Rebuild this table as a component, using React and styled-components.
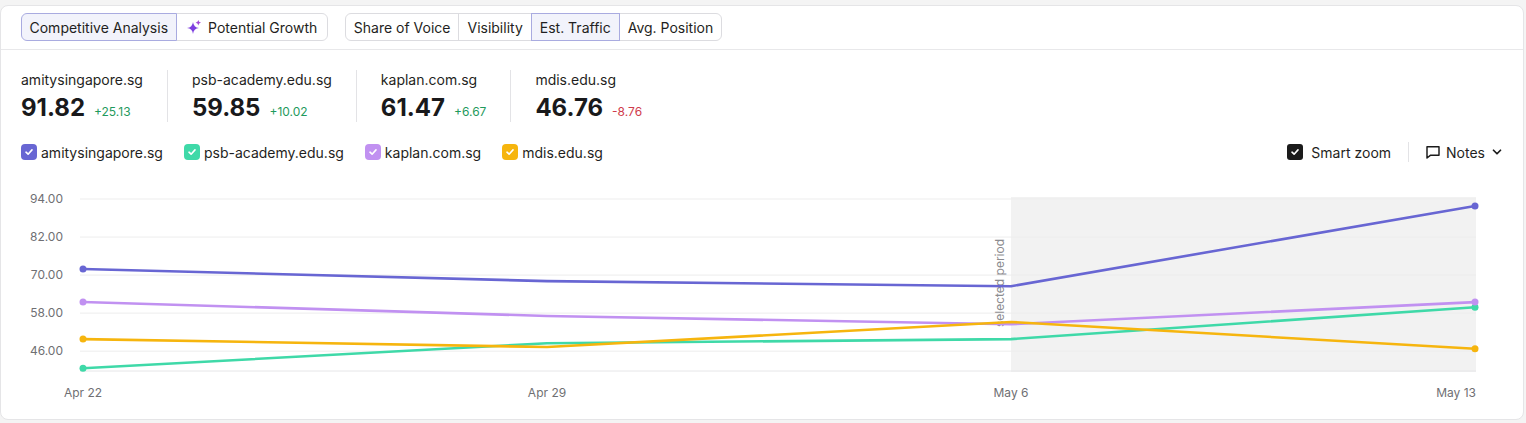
import React from "react";
import styled, { createGlobalStyle } from "styled-components";

const GlobalStyle = createGlobalStyle`
  html, body { margin: 0; padding: 0; background: #f4f4f4; }
  body { font-family: Inter, "Noto Sans", Arial, sans-serif; color: #1b1b1b; }
  * { box-sizing: border-box; }
`;

const Page = styled.div`
  padding: 5px 2px 3px 0;
`;

const Card = styled.div`
  background: #fff;
  border: 1px solid #e5e5e7;
  border-radius: 8px;
  height: 415px;
  overflow: hidden;
  display: flex;
  flex-direction: column;
`;

const Header = styled.div`
  display: flex;
  gap: 17px;
  padding: 7px 20px 8px;
  border-bottom: 1px solid #e8e8ea;
`;

const SegGroup = styled.div`
  display: flex;
`;

const Seg = styled.div`
  position: relative;
  z-index: ${(p) => (p.$active ? 1 : 0)};
  height: 28px;
  display: flex;
  align-items: center;
  gap: 6px;
  padding: 0 ${(p) => p.$pad || 8}px;
  font-size: 14px;
  color: #1f1f22;
  white-space: nowrap;
  background: ${(p) => (p.$active ? "#f2f3fb" : "#fff")};
  border: 1px solid ${(p) => (p.$active ? "#a9abe0" : "#dcdce0")};
  margin-left: -1px;
  &:first-child { margin-left: 0; border-radius: 6px 0 0 6px; }
  &:last-child { border-radius: 0 6px 6px 0; }
`;

const Metrics = styled.div`
  display: flex;
  padding: 20px 20px 0;
`;

const Metric = styled.div`
  display: flex;
  flex-direction: column;
  padding: 0 24px;
  border-left: 1px solid #e3e3e6;
  &:first-child { padding-left: 0; border-left: none; }
`;

const MetricLabel = styled.div`
  font-size: 14px;
  line-height: 20px;
  color: #1f1f22;
`;

const ValueRow = styled.div`
  display: flex;
  align-items: baseline;
  gap: 9px;
  margin-top: 4px;
`;

const Value = styled.span`
  font-size: 24px;
  line-height: 28px;
  font-weight: 700;
  color: #19191b;
`;

const Delta = styled.span`
  font-size: 12px;
  color: ${(p) => (p.$neg ? "#cf3b4c" : "#1f9a5d")};
`;

const LegendRow = styled.div`
  display: flex;
  justify-content: space-between;
  align-items: center;
  height: 20px;
  margin-top: 20px;
  padding: 0 19px 0 20px;
`;

const LegendList = styled.div`
  display: flex;
  align-items: center;
  gap: 21px;
`;

const LegendItem = styled.div`
  display: flex;
  align-items: center;
  gap: 4px;
  font-size: 14px;
  color: #1f1f22;
`;

const Box = styled.span`
  width: 16px;
  height: 16px;
  border-radius: ${(p) => p.$r || 4}px;
  background: ${(p) => p.$color};
  display: inline-flex;
  align-items: center;
  justify-content: center;
  flex: none;
`;

const Tools = styled.div`
  display: flex;
  align-items: center;
`;

const Tool = styled.div`
  display: flex;
  align-items: center;
  gap: ${(p) => p.$gap || 8}px;
  font-size: 14px;
  color: #1f1f22;
`;

const VDivider = styled.div`
  width: 1px;
  height: 20px;
  background: #e3e3e6;
  margin: 0 16px 0 17px;
`;

const ChartSvg = styled.svg`
  display: block;
  margin-top: 12px;
  font-family: Inter, "Noto Sans", Arial, sans-serif;
`;

const Check = () => (
  <svg width="10" height="10" viewBox="0 0 10 10">
    <path d="M2 5.2 L4.1 7.2 L8 2.9" fill="none" stroke="#fff" strokeWidth="1.6" strokeLinecap="round" strokeLinejoin="round" />
  </svg>
);

const Sparkle = () => (
  <svg width="16" height="16" viewBox="0 0 16 16">
    <path d="M7 3 Q7.6 8.4 13 9 Q7.6 9.6 7 15 Q6.4 9.6 1 9 Q6.4 8.4 7 3 Z" fill="#7d3fe0" />
    <path d="M12.3 1 Q12.6 3.4 15 3.7 Q12.6 4 12.3 6.4 Q12 4 9.6 3.7 Q12 3.4 12.3 1 Z" fill="#a54ad8" />
  </svg>
);

const NotesIcon = () => (
  <svg width="16" height="16" viewBox="0 0 24 24" fill="none" stroke="#1b1b1b" strokeWidth="2.2" strokeLinejoin="round">
    <path d="M3 4 H21 V17 H8 L3 21 Z" />
  </svg>
);

const Chevron = () => (
  <svg width="14" height="14" viewBox="0 0 24 24" fill="none" stroke="#1b1b1b" strokeWidth="3" strokeLinecap="round" strokeLinejoin="round">
    <path d="M6 9 L12 15 L18 9" />
  </svg>
);

const metrics = [
  { name: "amitysingapore.sg", value: "91.82", delta: "+25.13" },
  { name: "psb-academy.edu.sg", value: "59.85", delta: "+10.02" },
  { name: "kaplan.com.sg", value: "61.47", delta: "+6.67" },
  { name: "mdis.edu.sg", value: "46.76", delta: "-8.76", neg: true },
];

const series = [
  { name: "amitysingapore.sg", color: "#6866d3", values: [71.9, 68.1, 66.5, 91.82] },
  { name: "psb-academy.edu.sg", color: "#3fd9a8", values: [40.6, 48.5, 49.8, 59.85] },
  { name: "kaplan.com.sg", color: "#c191f1", values: [61.5, 57.1, 54.5, 61.47] },
  { name: "mdis.edu.sg", color: "#f6b50e", values: [49.8, 47.3, 55.2, 46.76] },
];

const xs = [83, 547, 1011, 1475];
const yOf = (v) => 199 + (94 - v) * 3.17;

const linePath = (pts) => pts.map((p, i) => `${i ? "L" : "M"}${p[0]},${p[1]}`).join(" ");

const yTicks = [94, 82, 70, 58, 46];
const xTicks = [
  { label: "Apr 22", x: 83, anchor: "middle" },
  { label: "Apr 29", x: 547, anchor: "middle" },
  { label: "May 6", x: 1011, anchor: "middle" },
  { label: "May 13", x: 1476, anchor: "end" },
];

const Chart = () => (
  <ChartSvg width="1522" height="235" viewBox="1 174 1522 235">
    <rect x="1011" y="197" width="465" height="175" fill="#f2f2f2" />
    {yTicks.map((v) => (
      <g key={v}>
        <line x1="80" x2="1476" y1={yOf(v)} y2={yOf(v)} stroke="#ededed" strokeWidth="1" />
        <text x="63" y={yOf(v) + 4} textAnchor="end" fontSize="12" fill="#6f6f73">
          {v.toFixed(2)}
        </text>
      </g>
    ))}
    <line x1="80" x2="1476" y1="371" y2="371" stroke="#e6e6e8" strokeWidth="1" />
    {xTicks.map((t) => (
      <text key={t.label} x={t.x} y="397" textAnchor={t.anchor} fontSize="12" fill="#6f6f73">
        {t.label}
      </text>
    ))}
    <text x="1004" y="283" transform="rotate(-90 1004 283)" textAnchor="middle" fontSize="12" fill="#8c8c90">
      selected period
    </text>
    {series.map((s) => {
      const pts = s.values.map((v, i) => [xs[i], yOf(v)]);
      return (
        <g key={s.name}>
          <path d={linePath(pts)} fill="none" stroke={s.color} strokeWidth="2.6" strokeLinejoin="round" />
          <circle cx={pts[0][0]} cy={pts[0][1]} r="3.5" fill={s.color} />
          <circle cx={pts[3][0]} cy={pts[3][1]} r="3.5" fill={s.color} />
        </g>
      );
    })}
  </ChartSvg>
);

export default function App() {
  return (
    <>
      <GlobalStyle />
      <Page>
        <Card>
          <Header>
            <SegGroup>
              <Seg $active $pad={7.5}>Competitive Analysis</Seg>
              <Seg $pad={9.5}>
                <Sparkle />
                Potential Growth
              </Seg>
            </SegGroup>
            <SegGroup>
              <Seg>Share of Voice</Seg>
              <Seg>Visibility</Seg>
              <Seg $active>Est. Traffic</Seg>
              <Seg>Avg. Position</Seg>
            </SegGroup>
          </Header>
          <Metrics>
            {metrics.map((m) => (
              <Metric key={m.name}>
                <MetricLabel>{m.name}</MetricLabel>
                <ValueRow>
                  <Value>{m.value}</Value>
                  <Delta $neg={m.neg}>{m.delta}</Delta>
                </ValueRow>
              </Metric>
            ))}
          </Metrics>
          <LegendRow>
            <LegendList>
              {series.map((s) => (
                <LegendItem key={s.name}>
                  <Box $color={s.color}>
                    <Check />
                  </Box>
                  {s.name}
                </LegendItem>
              ))}
            </LegendList>
            <Tools>
              <Tool>
                <Box $color="#1b1b1b" $r={3}>
                  <Check />
                </Box>
                Smart zoom
              </Tool>
              <VDivider />
              <Tool $gap={5}>
                <NotesIcon />
                Notes
                <Chevron />
              </Tool>
            </Tools>
          </LegendRow>
          <Chart />
        </Card>
      </Page>
    </>
  );
}
